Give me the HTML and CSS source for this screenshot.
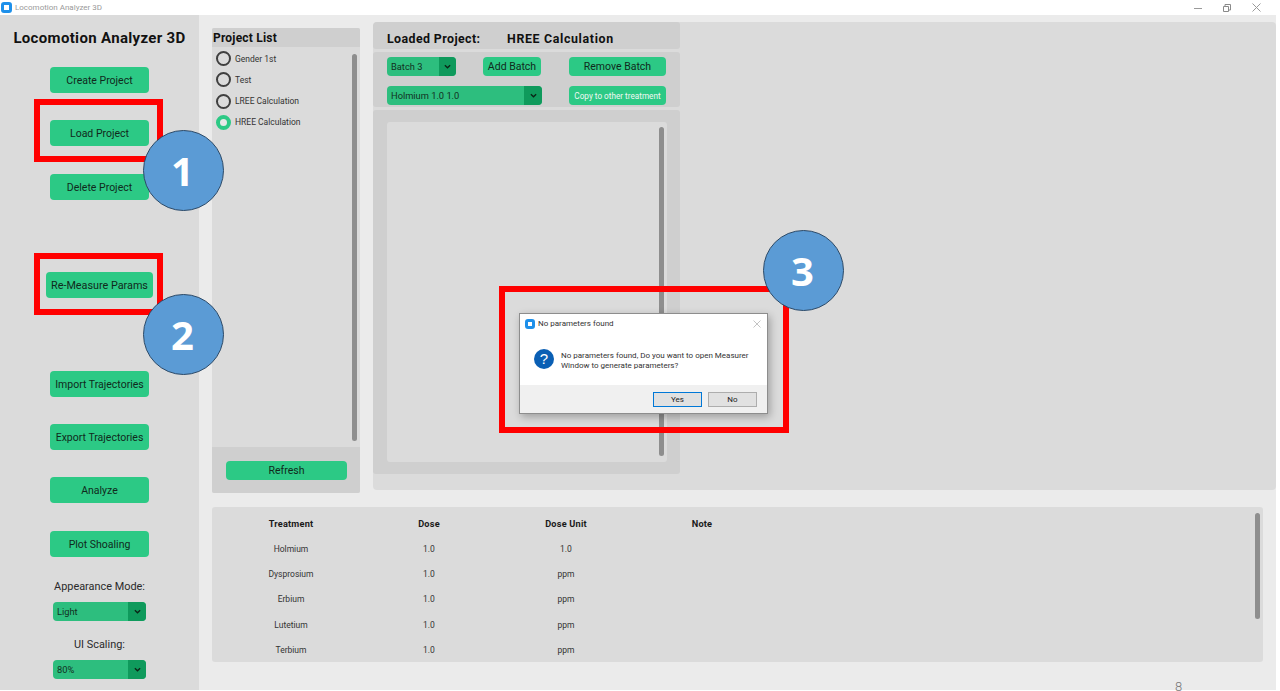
FILE: index.html
```html
<!DOCTYPE html>
<html lang="en">
<head>
<meta charset="utf-8">
<title>Locomotion Analyzer 3D</title>
<link rel="stylesheet" href="styles.css">
</head>
<body>
<div class="window">
  <header class="titlebar">
    <span class="app-icon"></span>
    <span class="title-text">Locomotion Analyzer 3D</span>
    <span class="win-controls">
      <svg width="8" height="8" viewBox="0 0 8 8"><path d="M0 4.5H8" stroke="#9a9a9a" fill="none"/></svg>
      <svg width="8" height="8" viewBox="0 0 8 8"><path d="M.5 2.5H5.5V7.5H.5ZM2 2.5V.5H7.5V6H5.5" stroke="#8a8a8a" fill="none"/></svg>
      <svg width="9" height="9" viewBox="0 0 9 9"><path d="M.5 .5L8.5 8.5M8.5 .5L.5 8.5" stroke="#9a9a9a" fill="none"/></svg>
    </span>
  </header>
  <div class="app">
    <aside class="sidebar">
      <h1 class="logo">Locomotion Analyzer 3D</h1>
      <button class="btn side-btn first">Create Project</button>
      <button class="btn side-btn gap-27">Load Project</button>
      <button class="btn side-btn gap-28">Delete Project</button>
      <button class="btn side-btn wide gap-72">Re-Measure Params</button>
      <button class="btn side-btn gap-73">Import Trajectories</button>
      <button class="btn side-btn gap-27">Export Trajectories</button>
      <button class="btn side-btn gap-27">Analyze</button>
      <button class="btn side-btn gap-28">Plot Shoaling</button>
      <div class="side-label mode-label">Appearance Mode:</div>
      <div class="select side-select"><span class="select-text">Light</span><span class="select-arrow"><svg class="chev" viewBox="0 0 8 5"><path d="M1 1L4 4L7 1"/></svg></span></div>
      <div class="side-label scale-label">UI Scaling:</div>
      <div class="select side-select"><span class="select-text">80%</span><span class="select-arrow"><svg class="chev" viewBox="0 0 8 5"><path d="M1 1L4 4L7 1"/></svg></span></div>
    </aside>
    <main class="main">
      <div class="top-row">
        <section class="project-list">
          <h2 class="list-title">Project List</h2>
          <div class="list-body">
            <div class="radios">
              <label class="radio-row"><span class="radio"></span>Gender 1st</label>
              <label class="radio-row"><span class="radio"></span>Test</label>
              <label class="radio-row"><span class="radio"></span>LREE Calculation</label>
              <label class="radio-row"><span class="radio on"></span>HREE Calculation</label>
            </div>
            <span class="scrollbar list-scroll"></span>
          </div>
          <div class="list-foot"><button class="btn refresh">Refresh</button></div>
        </section>
        <section class="right-panel">
          <div class="loaded">
            <div class="loaded-head"><span class="lh-label">Loaded Project:</span><span class="lh-value">HREE Calculation</span></div>
            <div class="loaded-controls">
              <div class="ctrl-row">
                <div class="select batch-select"><span class="select-text">Batch 3</span><span class="select-arrow"><svg class="chev" viewBox="0 0 8 5"><path d="M1 1L4 4L7 1"/></svg></span></div>
                <button class="btn add-batch">Add Batch</button>
                <button class="btn remove-batch">Remove Batch</button>
              </div>
              <div class="ctrl-row second">
                <div class="select treat-select"><span class="select-text">Holmium 1.0 1.0</span><span class="select-arrow"><svg class="chev" viewBox="0 0 8 5"><path d="M1 1L4 4L7 1"/></svg></span></div>
                <button class="btn copy-btn">Copy to other treatment</button>
              </div>
            </div>
            <div class="loaded-content">
              <div class="inner-list"><span class="scrollbar inner-scroll"></span></div>
            </div>
          </div>
        </section>
      </div>
      <section class="table-panel">
        <div class="table-grid">
          <div class="th">Treatment</div><div class="th">Dose</div><div class="th">Dose Unit</div><div class="th">Note</div>
          <div>Holmium</div><div>1.0</div><div>1.0</div><div></div>
          <div>Dysprosium</div><div>1.0</div><div>ppm</div><div></div>
          <div>Erbium</div><div>1.0</div><div>ppm</div><div></div>
          <div>Lutetium</div><div>1.0</div><div>ppm</div><div></div>
          <div>Terbium</div><div>1.0</div><div>ppm</div><div></div>
        </div>
        <span class="scrollbar table-scroll"></span>
      </section>
      <div class="page-no">8</div>
    </main>
  </div>
</div>

<div class="dialog">
  <div class="dlg-title">
    <span class="app-icon small"></span><span>No parameters found</span>
    <svg class="dlg-x" width="8" height="8" viewBox="0 0 8 8"><path d="M.5 .5L7.5 7.5M7.5 .5L.5 7.5" stroke="#c4c4c4" fill="none"/></svg>
  </div>
  <div class="dlg-body">
    <span class="q-icon">?</span>
    <p class="dlg-msg">No parameters found, Do you want to open Measurer Window to generate parameters?</p>
  </div>
  <div class="dlg-foot">
    <button class="dlg-btn default">Yes</button>
    <button class="dlg-btn">No</button>
  </div>
</div>

<div class="mark box-1"></div>
<div class="mark box-2"></div>
<div class="mark box-3"></div>
<div class="callout c-1">1</div>
<div class="callout c-2">2</div>
<div class="callout c-3">3</div>
</body>
</html>
```
FILE: styles.css
```css
* { box-sizing: border-box; }
html, body { margin: 0; height: 100%; }
body {
  background: #fff;
  font-family: Roboto, "Liberation Sans", sans-serif;
  color: #1d1d1d;
  overflow: hidden;
  position: relative;
}
.window { width: 1276px; height: 691px; display: flex; flex-direction: column; }
.titlebar {
  height: 15px; background: #fff; display: flex; align-items: center;
  padding-left: 1px; font-size: 8px; color: #9a9a9a; gap: 3px;
}
.app-icon {
  width: 11px; height: 11px; border-radius: 3px; background: #fff;
  border: 3px solid #1e90ea; display: inline-block; flex: none;
}
.app-icon.small { width: 10px; height: 10px; }
.title-text { letter-spacing: 0; }
.win-controls { margin-left: auto; margin-right: 15px; display: flex; gap: 21px; align-items: center; }
.app { flex: 1; display: flex; background: #ebebeb; min-height: 0; border-bottom: 1px solid #fff; }

.sidebar { width: 199px; background: #dbdbdb; display: flex; flex-direction: column; align-items: center; flex: none; }
.logo { margin: 14px 0 0; font-size: 15px; line-height: 18px; font-weight: 700; letter-spacing: .33px; color: #111; white-space: nowrap; }
.btn {
  background: #2cc985; border: 0; border-radius: 4px; color: #10291c;
  font-family: inherit; padding: 0; white-space: nowrap; display: block;
}
.side-btn { width: 99px; height: 26px; font-size: 10.5px; }
.side-btn.wide { width: 107px; font-size: 10.8px; }
.first { margin-top: 20px; }
.gap-27 { margin-top: 27px; }
.gap-28 { margin-top: 28px; }
.gap-72 { margin-top: 72px; }
.gap-73 { margin-top: 73px; }
.side-label { font-size: 10.9px; line-height: 14px; color: #2a2a2a; }
.mode-label { margin-top: 23px; }
.scale-label { margin-top: 17px; }
.select { display: flex; height: 19px; background: #2dbe7e; border-radius: 4px; overflow: hidden; font-size: 9.3px; color: #12301f; }
.select-text { flex: 1; padding-left: 4px; align-self: center; white-space: nowrap; }
.select-arrow { width: 18px; background: #0f9a5c; display: flex; align-items: center; justify-content: center; flex: none; }
.chev { width: 7px; height: 5px; fill: none; stroke: #0b2416; stroke-width: 1.5; }
.side-select { width: 93px; margin-top: 8px; }

.main { flex: 1; padding-left: 13px; min-width: 0; }
.top-row { display: flex; gap: 13px; align-items: flex-start; }
.project-list { width: 148px; height: 465px; margin-top: 13px; background: #dbdbdb; display: flex; flex-direction: column; flex: none; border-radius: 2px; overflow: hidden; }
.list-title { margin: 0; height: 19px; background: #cfcfcf; font-size: 12px; line-height: 21px; padding-left: 1px; font-weight: 700; color: #111; letter-spacing: .2px; }
.list-body { flex: 1; position: relative; padding: 4px 0 0 4px; min-height: 0; }
.radios { display: flex; flex-direction: column; gap: 6.3px; }
.radio-row { display: flex; align-items: center; gap: 4px; font-size: 8.5px; height: 15px; color: #333; }
.radio { width: 15px; height: 15px; border-radius: 50%; border: 2px solid #3f3f3f; flex: none; }
.radio.on { border: 4px solid #2cc985; background: #e8e8e8; }
.scrollbar { position: absolute; background: #8e8e8e; border-radius: 3px; width: 5px; }
.list-scroll { right: 3px; top: 7px; height: 387px; }
.list-foot { height: 46px; background: #cfcfcf; padding: 14px 0 0 14px; flex: none; }
.refresh { width: 121px; height: 19px; font-size: 10.5px; }

.right-panel { margin-top: 7px; flex: 1; height: 468px; background: #dbdbdb; border-radius: 4px; overflow: hidden; }
.loaded { width: 307px; height: 452px; display: flex; flex-direction: column; gap: 3px; }
.loaded-head { height: 27px; background: #cfcfcf; border-radius: 3px; padding: 10px 0 0 14px; font-size: 12.4px; line-height: 14px; font-weight: 700; color: #111; letter-spacing: .4px; white-space: nowrap; flex: none; }
.lh-label { display: inline-block; width: 120px; }
.lh-value { letter-spacing: .65px; }
.loaded-controls { height: 55px; background: #cfcfcf; border-radius: 3px; padding: 5px 14px 0; flex: none; }
.ctrl-row { display: flex; align-items: flex-start; }
.ctrl-row.second { margin-top: 10px; }
.batch-select { width: 69px; }
.batch-select .select-arrow { width: 17px; }
.add-batch { width: 58px; height: 19px; margin-left: 27px; font-size: 10.5px; }
.remove-batch { width: 97px; height: 19px; margin-left: 28px; font-size: 10.5px; }
.treat-select { width: 155px; }
.treat-select .select-arrow { width: 18px; }
.copy-btn { width: 97px; height: 19px; margin-left: 27px; font-size: 8.2px; color: #f0f8f3; }
.loaded-content { flex: 1; background: #cfcfcf; border-radius: 3px; padding: 12px 13px 12px 14px; }
.inner-list { position: relative; height: 100%; background: #dbdbdb; border-radius: 3px; }
.inner-scroll { right: 3px; top: 5px; bottom: 6px; }

.table-panel { position: relative; width: 1051px; height: 155px; margin-top: 14px; background: #dbdbdb; border-radius: 3px; }
.table-grid {
  display: grid; grid-template-columns: 158px 118px 156px 116px; grid-auto-rows: 25.25px;
  padding-top: 4px; font-size: 8.5px; color: #333; text-align: center; align-items: center;
}
.th { font-weight: 700; font-size: 9.2px; color: #1a1a1a; letter-spacing: .2px; }
.table-scroll { right: 3px; top: 6px; height: 106px; }
.page-no { width: 1051px; margin-top: 19px; padding-left: 963px; font-size: 13px; line-height: 12px; color: #777; font-weight: 300; }

.dialog {
  position: absolute; left: 519px; top: 313px; width: 249px; height: 101px;
  background: #fff; border: 1px solid #8d8d8d; box-shadow: 2px 3px 8px rgba(0,0,0,.28);
  display: flex; flex-direction: column; font-size: 8px; color: #333;
}
.dlg-title { height: 19px; display: flex; align-items: center; padding-left: 5px; gap: 3px; position: relative; flex: none; }
.dlg-x { position: absolute; right: 6px; top: 6px; }
.dlg-body { flex: 1; display: flex; align-items: flex-start; padding: 16px 0 0 14px; gap: 7px; }
.q-icon { width: 20px; height: 20px; border-radius: 50%; background: #0a5fb4; color: #fff; font-size: 15px; line-height: 20px; text-align: center; flex: none; font-family: "Liberation Sans", sans-serif; }
.dlg-msg { margin: 0; line-height: 9.5px; width: 195px; padding-top: 2px; }
.dlg-foot { height: 28px; background: #f0f0f0; display: flex; justify-content: flex-end; gap: 6px; padding: 7px 10px 0 0; flex: none; }
.dlg-btn { width: 49px; height: 15px; background: #e1e1e1; border: 1px solid #adadad; font-family: inherit; font-size: 8px; color: #222; padding: 0; }
.dlg-btn.default { border: 1.5px solid #0078d7; }

.mark { position: absolute; border: 6px solid #f00; }
.box-1 { left: 34px; top: 99px; width: 129px; height: 63px; }
.box-2 { left: 34px; top: 253px; width: 129px; height: 62px; }
.box-3 { left: 499px; top: 286px; width: 290px; height: 147px; }
.callout {
  position: absolute; width: 81px; height: 81px; border-radius: 50%;
  background: #5b9bd5; border: 1px solid #2c4a68; color: #fff;
  font-family: "Open Sans", "Noto Sans", sans-serif; font-weight: 700; font-size: 40px;
  padding-right: 2px;
  display: flex; align-items: center; justify-content: center;
}
.c-1 { left: 143px; top: 130px; }
.c-2 { left: 143px; top: 294px; }
.c-3 { left: 763px; top: 230px; }
```
